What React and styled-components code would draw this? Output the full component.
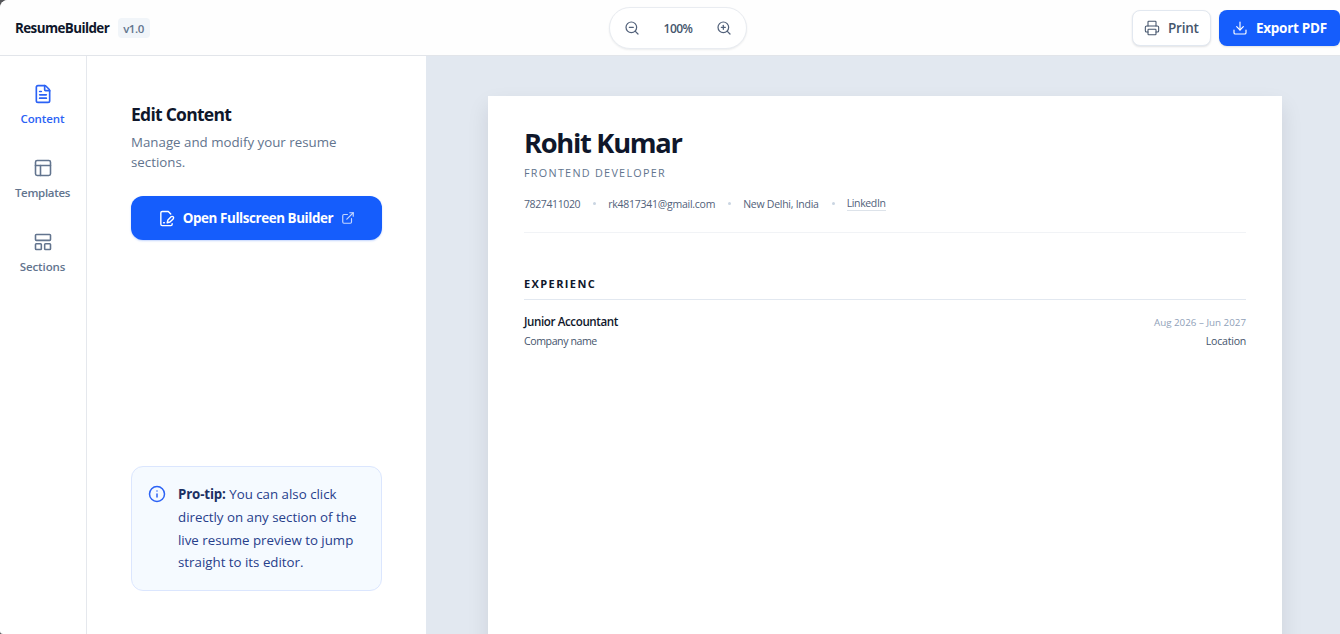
import React from 'react';
import styled, { createGlobalStyle } from 'styled-components';
import {
  ZoomIn, ZoomOut, Printer, Download, FileText, PanelsTopLeft,
  LayoutPanelTop, ExternalLink, Info,
} from 'lucide-react';

const GlobalStyle = createGlobalStyle`
  * { box-sizing: border-box; }
  body {
    margin: 0;
    overflow: hidden;
    background: #55565a;
    font-family: "Segoe UI", "Open Sans", "Noto Sans", sans-serif;
    color: #0f172b;
  }
  h1, h2, h3, p { margin: 0; }
  button { font-family: inherit; cursor: pointer; }
`;

const Shell = styled.div`
  display: flex;
  flex-direction: column;
  height: 634px;
  background: #fff;
  border-radius: 8px 0 0 3px;
  overflow: hidden;
  white-space: nowrap;
`;

const Header = styled.header`
  display: grid;
  grid-template-columns: 1fr auto 1fr;
  align-items: center;
  flex: none;
  height: 56px;
  padding-left: 15px;
  background: #fefefe;
  border-bottom: 1px solid #e2e5ea;
`;

const Brand = styled.div`
  display: flex;
  align-items: center;
  gap: 9px;
`;

const BrandName = styled.span`
  font-size: 13.4px;
  line-height: 20px;
  font-weight: 700;
  letter-spacing: -0.58px;
`;

const Version = styled.span`
  padding: 3px 6px 1px 5px;
  border-radius: 4px;
  background: #f1f5f9;
  color: #62748e;
  font-size: 11.5px;
  line-height: 16px;
  font-weight: 600;
  letter-spacing: -0.45px;
`;

const ZoomPill = styled.div`
  display: flex;
  align-items: center;
  justify-content: space-between;
  width: 138px;
  height: 42px;
  padding: 0 13px 0 14px;
  border: 1px solid #e9ecf1;
  border-radius: 21px;
  background: #fff;
  box-shadow: 0 1px 2px rgba(15, 23, 42, 0.08);
`;

const IconButton = styled.button`
  display: flex;
  padding: 0;
  border: 0;
  background: none;
  color: #52617a;
`;

const ZoomValue = styled.span`
  padding-top: 1px;
  font-size: 12px;
  font-weight: 600;
  color: #45556c;
  letter-spacing: -0.5px;
`;

const Actions = styled.div`
  display: flex;
  justify-content: flex-end;
  gap: 8px;
`;

const ActionButton = styled.button`
  display: flex;
  align-items: center;
  gap: 8px;
  width: ${(p) => (p.$primary ? '121px' : '79px')};
  height: 36px;
  padding: 0 0 0 ${(p) => (p.$primary ? '13px' : '11px')};
  border: ${(p) => (p.$primary ? '0' : '1px solid #e2e8f0')};
  border-radius: ${(p) => (p.$primary ? '8px 6px 6px 8px' : '8px')};
  background: ${(p) => (p.$primary ? '#155dfc' : '#fff')};
  color: ${(p) => (p.$primary ? '#fff' : '#45556c')};
  box-shadow: 0 1px 2px rgba(15, 23, 42, 0.12);
  font-size: 13.5px;
  font-weight: ${(p) => (p.$primary ? 700 : 600)};
  letter-spacing: ${(p) => (p.$primary ? '-0.27px' : '-0.25px')};
  white-space: nowrap;
`;

const Body = styled.div`
  display: flex;
  flex: 1;
  min-height: 0;
`;

const Rail = styled.nav`
  display: flex;
  flex-direction: column;
  gap: 30px;
  flex: none;
  width: 87px;
  padding: 28px 1px 0 0;
  border-right: 1px solid #e5e8ed;
`;

const RailItem = styled.a`
  display: flex;
  flex-direction: column;
  align-items: center;
  gap: 6px;
  height: 44px;
  color: ${(p) => (p.$active ? '#2b62f5' : '#62748e')};
  font-size: 11.5px;
  line-height: 18px;
  font-weight: 600;
  letter-spacing: ${(p) => p.$track || '-0.1px'};
`;

const Panel = styled.aside`
  display: flex;
  flex-direction: column;
  justify-content: space-between;
  flex: none;
  width: 339px;
  padding: 44px 44px 43px;
`;

const PanelTitle = styled.h2`
  font-size: 17.5px;
  line-height: 28px;
  font-weight: 700;
  letter-spacing: -0.74px;
`;

const PanelText = styled.p`
  margin-top: 4px;
  color: #62748e;
  font-size: 13.3px;
  line-height: 20px;
  white-space: normal;
`;

const BuilderButton = styled.button`
  display: flex;
  align-items: center;
  justify-content: center;
  gap: 8px;
  width: 251px;
  height: 44px;
  margin-top: 24px;
  padding: 0;
  border: 0;
  border-radius: 12px;
  background: #155dfc;
  color: #fff;
  font-size: 13.4px;
  font-weight: 700;
  letter-spacing: -0.41px;
  box-shadow: 0 1px 2px rgba(21, 93, 252, 0.25);
`;

const FadedIcon = styled.span`
  display: flex;
  opacity: 0.75;
`;

const Tip = styled.div`
  display: flex;
  gap: 12px;
  height: 125px;
  padding: 16px;
  border: 1px solid #dbe6fe;
  border-radius: 12px;
  background: #f5faff;
  color: #2b62f5;
`;

const TipIcon = styled.span`
  display: flex;
  flex: none;
  padding-top: 2px;
`;

const TipText = styled.p`
  color: #27408b;
  font-size: 13.3px;
  line-height: 22.75px;
  strong {
    color: #1c2f63;
    font-weight: 700;
    letter-spacing: -0.15px;
  }
`;

const TipLine = styled.span`
  display: block;
`;

const Canvas = styled.main`
  display: flex;
  justify-content: center;
  flex: 1;
  padding: 40px 0 0 4px;
  background: #e2e8f0;
`;

const Paper = styled.article`
  width: 794px;
  height: 1123px;
  padding: 30px 36px;
  background: #fff;
  box-shadow: 0 10px 20px rgba(15, 23, 42, 0.1);
`;

const PersonName = styled.h1`
  font-size: 27.3px;
  line-height: 34px;
  font-weight: 700;
  letter-spacing: -1.3px;
`;

const Role = styled.p`
  margin-top: 5px;
  color: #62748e;
  font-size: 10.8px;
  line-height: 16px;
  font-weight: 500;
  letter-spacing: 1.28px;
`;

const Contacts = styled.div`
  display: flex;
  align-items: center;
  height: 52px;
  padding-bottom: 6px;
  border-bottom: 1px solid #f1f3f6;
  color: #52617a;
  font-size: 10.5px;
  line-height: 14px;
`;

const ContactItem = styled.span`
  letter-spacing: ${(p) => p.$track};
`;

const Dot = styled.span`
  width: 3px;
  height: 3px;
  margin: 0 12px 0 13px;
  border-radius: 50%;
  background: #cad5e2;
`;

const ContactLink = styled(ContactItem)`
  padding-top: 1px;
  border-bottom: 1px solid #dde3ea;
  line-height: 13px;
`;

const SectionTitle = styled.h3`
  height: 24px;
  margin-top: 43px;
  border-bottom: 1px solid #e2e8f0;
  font-size: 11px;
  line-height: 16px;
  font-weight: 700;
  letter-spacing: 1.4px;
`;

const Entry = styled.div`
  display: grid;
  grid-template-columns: 1fr auto;
  grid-template-rows: 19px 19px;
  align-items: center;
  margin-top: 12px;
  font-size: 10.6px;
`;

const JobTitle = styled.span`
  font-size: 11.6px;
  font-weight: 600;
  letter-spacing: -0.4px;
`;

const Dates = styled.span`
  justify-self: end;
  padding-top: 2px;
  color: #90a1b9;
  font-size: 9.8px;
`;

const Detail = styled.span`
  justify-self: ${(p) => (p.$end ? 'end' : 'start')};
  color: #45556c;
  letter-spacing: ${(p) => (p.$end ? '-0.25px' : '-0.42px')};
`;

const FilePen = () => (
  <svg width="17" height="17" viewBox="0 0 24 24" fill="none" stroke="currentColor" strokeWidth="2" strokeLinecap="round" strokeLinejoin="round">
    <path d="M20 19.5v.5a2 2 0 0 1-2 2H6a2 2 0 0 1-2-2V4a2 2 0 0 1 2-2h8.5L18 5.5" />
    <path d="M8 18h1" />
    <path d="M18.42 9.61a2.1 2.1 0 1 1 2.97 2.97L16.95 17 13 18l.99-3.95 4.43-4.44Z" />
  </svg>
);

export default function App() {
  return (
    <>
      <GlobalStyle />
      <Shell>
        <Header>
          <Brand>
            <BrandName>ResumeBuilder</BrandName>
            <Version>v1.0</Version>
          </Brand>
          <ZoomPill>
            <IconButton aria-label="Zoom out"><ZoomOut size={16} strokeWidth={1.85} /></IconButton>
            <ZoomValue>100%</ZoomValue>
            <IconButton aria-label="Zoom in"><ZoomIn size={16} strokeWidth={1.85} /></IconButton>
          </ZoomPill>
          <Actions>
            <ActionButton><Printer size={16} strokeWidth={1.6} />Print</ActionButton>
            <ActionButton $primary><Download size={16} strokeWidth={1.75} />Export PDF</ActionButton>
          </Actions>
        </Header>
        <Body>
          <Rail>
            <RailItem $active><FileText size={20} />Content</RailItem>
            <RailItem $track="-0.3px"><PanelsTopLeft size={20} strokeWidth={1.9} />Templates</RailItem>
            <RailItem><LayoutPanelTop size={20} strokeWidth={1.9} />Sections</RailItem>
          </Rail>
          <Panel>
            <div>
              <PanelTitle>Edit Content</PanelTitle>
              <PanelText>Manage and modify your resume<br />sections.</PanelText>
              <BuilderButton>
                <FilePen />
                Open Fullscreen Builder
                <FadedIcon><ExternalLink size={14} /></FadedIcon>
              </BuilderButton>
            </div>
            <Tip>
              <TipIcon><Info size={18} /></TipIcon>
              <TipText>
                <TipLine><strong>Pro-tip:</strong> You can also click</TipLine>
                <TipLine>directly on any section of the</TipLine>
                <TipLine>live resume preview to jump</TipLine>
                <TipLine>straight to its editor.</TipLine>
              </TipText>
            </Tip>
          </Panel>
          <Canvas>
            <Paper>
              <PersonName>Rohit Kumar</PersonName>
              <Role>FRONTEND DEVELOPER</Role>
              <Contacts>
                <ContactItem $track="-0.38px">7827411020</ContactItem>
                <Dot />
                <ContactItem $track="-0.25px">rk4817341@gmail.com</ContactItem>
                <Dot />
                <ContactItem $track="-0.26px">New Delhi, India</ContactItem>
                <Dot />
                <ContactLink $track="-0.35px">LinkedIn</ContactLink>
              </Contacts>
              <SectionTitle>EXPERIENC</SectionTitle>
              <Entry>
                <JobTitle>Junior Accountant</JobTitle>
                <Dates>Aug 2026 – Jun 2027</Dates>
                <Detail>Company name</Detail>
                <Detail $end>Location</Detail>
              </Entry>
            </Paper>
          </Canvas>
        </Body>
      </Shell>
    </>
  );
}
